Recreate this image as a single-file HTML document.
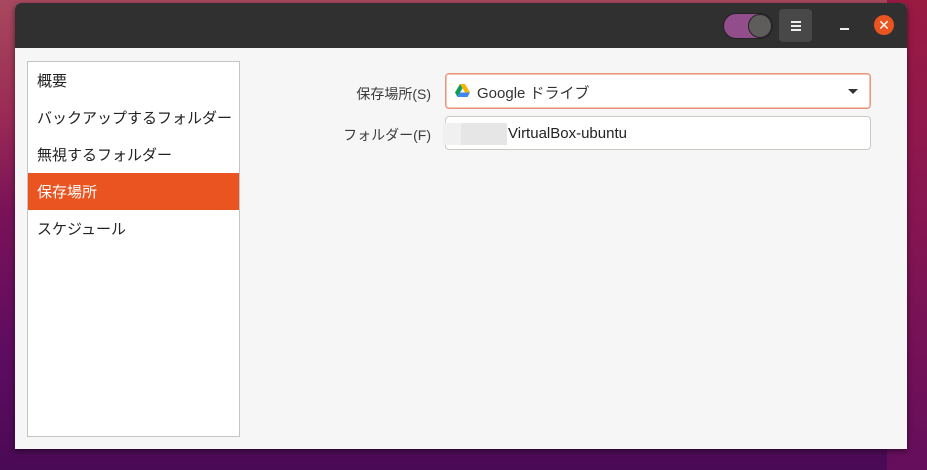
<!DOCTYPE html>
<html><head><meta charset="utf-8"><style>
*{margin:0;padding:0;box-sizing:border-box}
body{width:927px;height:470px;overflow:hidden;position:relative;font-family:"Liberation Sans","Noto Sans CJK JP",sans-serif;
background:linear-gradient(180deg,#a8485e 0,#9a2a55 25%,#7a1258 45%,#5e0c60 75%,#4a0a55 100%);}
.bgr{position:absolute;right:0;top:0;width:40px;height:470px;background:linear-gradient(180deg,#9a1a42 0,#8a1650 40%,#640e5c 100%)}
.win{position:absolute;left:15px;top:3px;width:892px;height:446px;background:#f6f6f6;border-radius:6px 6px 0 0;overflow:hidden;box-shadow:0 2px 6px rgba(0,0,0,.5)}
.tb{height:45px;background:#303030;position:relative}
.sw{position:absolute;left:708px;top:10px;width:50px;height:26px;border-radius:13px;background:#924d8b;border:1px solid #222}
.sw i{position:absolute;right:0;top:0;width:24px;height:24px;border-radius:50%;background:#5f5d5c;border:1px solid #222}
.mb{position:absolute;left:764px;top:6px;width:33px;height:33px;border-radius:4px;background:#484848}
.mb b{position:absolute;left:12px;width:10px;height:1.5px;background:#eee}
.min{position:absolute;left:825px;top:25px;width:9px;height:2px;background:#eee}
.cl{position:absolute;left:859px;top:12px;width:20px;height:20px;border-radius:50%;background:#e95420;color:#fff;font-size:14px;line-height:20px;text-align:center}
.side{position:absolute;left:12px;top:58px;width:213px;height:376px;background:#fff;border:1px solid #c4c4c4}
.it{height:37px;line-height:40px;padding-left:9px;font-size:15px;color:#222}
.sel{background:#e95420;color:#fff}
.lbl{position:absolute;font-size:14px;color:#3c3c3c;text-align:right}
.combo{position:absolute;left:430px;top:70px;width:426px;height:36px;border:1px solid #e9937a;border-radius:4px;background:#fff;box-shadow:0 0 0 1px #f3c5b5 inset}
.entry{position:absolute;left:430px;top:113px;width:426px;height:34px;border:1px solid #cdc7c2;border-radius:4px;background:#fff}
</style></head><body>
<div class="bgr"></div>
<div class="win">
<div class="tb">
<div class="sw"><i></i></div>
<div class="mb"><b style="top:12px"></b><b style="top:16px"></b><b style="top:20px"></b></div>
<div class="min"></div>
<div class="cl">✕</div>
</div>
<div class="side">
<div class="it">概要</div>
<div class="it">バックアップするフォルダー</div>
<div class="it">無視するフォルダー</div>
<div class="it sel">保存場所</div>
<div class="it">スケジュール</div>
</div>
<div class="lbl" style="left:300px;top:81px;width:116px">保存場所(S)</div>
<div class="lbl" style="left:300px;top:122px;width:116px">フォルダー(F)</div>
<div class="combo">
<svg style="position:absolute;left:9px;top:10px" width="15" height="13" viewBox="0 0 15 13"><path d="M5 0h5l5 8.5h-5z" fill="#f4b400"/><path d="M5 0l2.5 4.3L2.5 13 0 8.5z" fill="#0f9d58"/><path d="M2.5 13l2.5-4.5h10L12.5 13z" fill="#4285f4"/></svg>
<span style="position:absolute;left:31px;top:8px;font-size:15px;color:#333">Google ドライブ</span>
<span style="position:absolute;right:12px;top:15px;width:0;height:0;border-left:5px solid transparent;border-right:5px solid transparent;border-top:5px solid #333"></span>
</div>
<div class="entry">
<span style="position:absolute;left:-3px;top:6px;width:64px;height:22px;background:#f0f0f0"></span>
<span style="position:absolute;left:15px;top:6px;width:46px;height:22px;background:#e6e6e6"></span>
<span style="position:absolute;left:62px;top:8px;font-size:15px;color:#222">VirtualBox-ubuntu</span>
</div>
</div>
</body></html>
